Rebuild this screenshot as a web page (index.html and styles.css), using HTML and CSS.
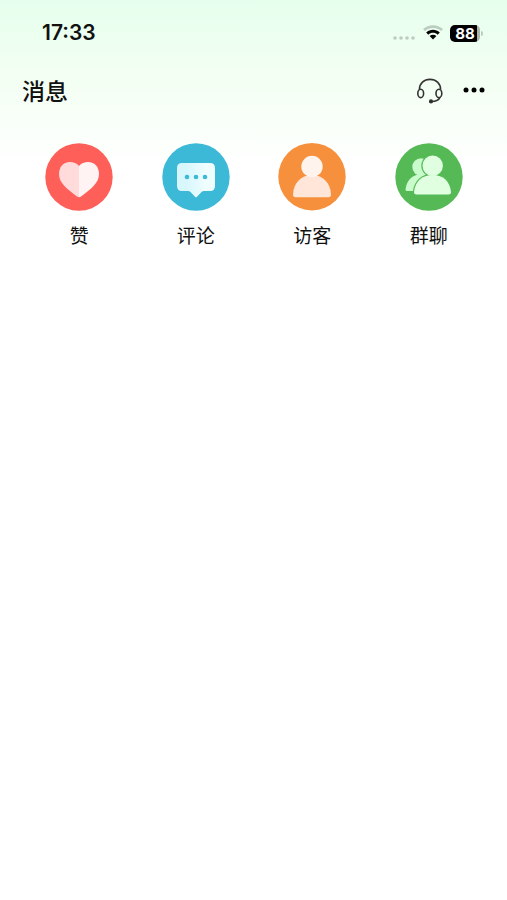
FILE: index.html
```html
<!DOCTYPE html>
<html lang="zh-CN">
<head>
<meta charset="UTF-8">
<meta name="viewport" content="width=device-width, initial-scale=1.0">
<title>消息</title>
<link rel="stylesheet" href="styles.css">
</head>
<body>

<div class="status-bar">
    <span class="time">17:33</span>
    <div class="status-icons">
        <svg class="signal" width="24" height="20" viewBox="0 0 24 20" fill="#bccdbf">
            <circle cx="3" cy="15" r="1.8"/>
            <circle cx="9" cy="15" r="1.8"/>
            <circle cx="15" cy="15" r="1.8"/>
            <circle cx="21" cy="15" r="1.8"/>
        </svg>
        <svg width="20" height="20" viewBox="0 0 20 20">
            <path d="M0 6C5.600.9 14.400.9 20 6L18.200 8C13.500 3.900 6.500 3.900 1.800 8Z" fill="#bccdbf"/>
            <path d="M3.200 9.500C7.100 5.800 12.900 5.800 16.800 9.500L14.700 11.700C12 9.200 8 9.200 5.300 11.700Z" fill="#000"/>
            <path d="M6.600 13C8.600 11.200 11.400 11.200 13.400 13L10 16.500Z" fill="#000"/>
        </svg>
        <div class="battery">
            <span class="battery-level">88</span>
        </div>
    </div>
</div>

<header class="header">
    <h1>消息</h1>
    <div class="actions">
        <button type="button" aria-label="客服">
            <svg width="28" height="28" viewBox="0 1 28 28" fill="none" stroke="#333" stroke-width="1.6">
                <path d="M3.4 12.500C3.400 6.200 8 2.400 14 2.400S24.600 6.200 24.600 12.500"/>
                <ellipse cx="4.700" cy="16.400" rx="2.900" ry="4.200"/>
                <ellipse cx="22.900" cy="16.400" rx="2.900" ry="4.200"/>
                <path d="M24 20.300C23 23 20 24.500 15.500 24.500"/>
                <circle cx="15" cy="24.400" r="1.300" fill="#222"/>
            </svg>
        </button>
        <button type="button" aria-label="更多">
            <svg width="24" height="28" viewBox="0 1 24 28" fill="#000">
                <circle cx="4" cy="13" r="2.5"/>
                <circle cx="12" cy="13" r="2.5"/>
                <circle cx="20" cy="13" r="2.5"/>
            </svg>
        </button>
    </div>
</header>

<nav class="menu">
    <a href="#like">
        <svg width="68" height="68" viewBox="0 0 68 68">
            <circle cx="34" cy="34" r="33.700" fill="#fe5f59"/>
            <path d="M34 23C31.500 20 28.500 19 25 19C18 19 14 24.500 14 31C14 40 22 46 32 53.500Q33 54.200 34 54.200Z" fill="#ffdbdc"/>
            <path d="M34 23C36.500 20 39.500 19 43 19C50 19 54 24.500 54 31C54 40 46 46 36 53.500Q35 54.200 34 54.200Z" fill="#fff3f3"/>
        </svg>
        <span>赞</span>
    </a>
    <a href="#comment">
        <svg width="68" height="68" viewBox="0 0 68 68">
            <defs>
                <linearGradient id="bubble">
                    <stop offset="0.25" stop-color="#d8f7fd"/>
                    <stop offset="0.75" stop-color="#effdff"/>
                </linearGradient>
            </defs>
            <circle cx="34" cy="34" r="33.700" fill="#3db9d8"/>
            <path d="M20 20H48Q53 20 53 25V43Q53 48 48 48H42Q40.500 48 39.500 49L35 53.800Q34 54.800 33 53.800L28.500 49Q27.500 48 26 48H20Q15 48 15 43V25Q15 20 20 20Z" fill="url(#bubble)"/>
            <g fill="#3db9d8">
                <circle cx="25" cy="34" r="2.300"/>
                <circle cx="34" cy="34" r="2.300"/>
                <circle cx="43" cy="34" r="2.300"/>
            </g>
        </svg>
        <span>评论</span>
    </a>
    <a href="#visitor">
        <svg width="68" height="68" viewBox="0 0 68 68">
            <circle cx="34" cy="33.700" r="33.700" fill="#f6903d"/>
            <path d="M15 51.500C15.500 40 23 32 34 32S52.500 40 53 51.500Q53 54.300 50.500 54.300H17.500Q15 54.300 15 51.500Z" fill="#ffe6d9"/>
            <circle cx="34" cy="23.500" r="10.700" fill="#fff3ed"/>
        </svg>
        <span>访客</span>
    </a>
    <a href="#group">
        <svg width="68" height="68" viewBox="0 0 68 68">
            <defs>
                <g id="person">
                    <path d="M19 49C20 38.500 27 32 37.700 32S55 38.500 56 49Q56 51.500 53.500 51.500H21.500Q19 51.500 19 49Z"/>
                    <circle cx="37.700" cy="22.800" r="10.200"/>
                </g>
            </defs>
            <circle cx="34" cy="34" r="33.700" fill="#55ba55"/>
            <g fill="#c9fbcd">
                <circle cx="26" cy="24" r="8.700"/>
                <path d="M10.500 46.500C11.500 38 17 31.500 25 31.500L34 30V48H12Q10.500 48 10.500 46.500Z"/>
            </g>
            <!-- green rim keeps the front figure apart from the one behind -->
            <use href="#person" fill="#55ba55" stroke="#55ba55" stroke-width="2.4"/>
            <use href="#person" fill="#e0ffe1"/>
        </svg>
        <span>群聊</span>
    </a>
</nav>

</body>
</html>
```

FILE: styles.css
```css
* {
    box-sizing: border-box;
}
body {
    margin: 0;
    min-height: 100vh;
    font-family: "Liberation Sans", "Noto Sans CJK SC", sans-serif;
    color: #111;
    background: #fff linear-gradient(#e6ffed, #f2fff2 72px, #fff 168px) no-repeat;
}
.status-bar {
    display: flex;
    align-items: center;
    justify-content: space-between;
    height: 66px;
    padding: 0 24px 0 42px;
}
.time {
    font-family: Inter, sans-serif;
    font-size: 21px;
    font-weight: 600;
    line-height: 24px;
}
.status-icons {
    display: flex;
    align-items: center;
    gap: 7px;
}
.battery {
    display: flex;
    align-items: center;
    gap: 1px;
}
.battery::after {
    content: "";
    width: 2px;
    height: 5px;
    border-radius: 0 2px 2px 0;
    background: #bccdbf;
}
.battery-level {
    width: 30px;
    height: 17px;
    border-radius: 5px;
    background: linear-gradient(90deg, #000 27px, #a9b5ab 27px);
    color: #fff;
    font-family: Inter, sans-serif;
    font-size: 15px;
    font-weight: 700;
    line-height: 17px;
    text-align: center;
}
.header {
    display: flex;
    align-items: center;
    justify-content: space-between;
    height: 52px;
    padding: 0 21px 0 22px;
}
.header h1 {
    margin: 0;
    font-size: 23px;
    font-weight: 500;
    line-height: 32px;
}
.actions {
    display: flex;
    gap: 18px;
}
.actions button {
    padding: 0;
    border: none;
    background: none;
    cursor: pointer;
}
.actions svg,
.menu svg {
    display: block;
}
.menu {
    display: grid;
    grid-template-columns: repeat(4, 1fr);
    padding: 25px 20px 25px 21px;
}
.menu a {
    display: flex;
    flex-direction: column;
    align-items: center;
    gap: 12px;
    color: #111;
    font-size: 19px;
    line-height: 28px;
    text-decoration: none;
}
```
